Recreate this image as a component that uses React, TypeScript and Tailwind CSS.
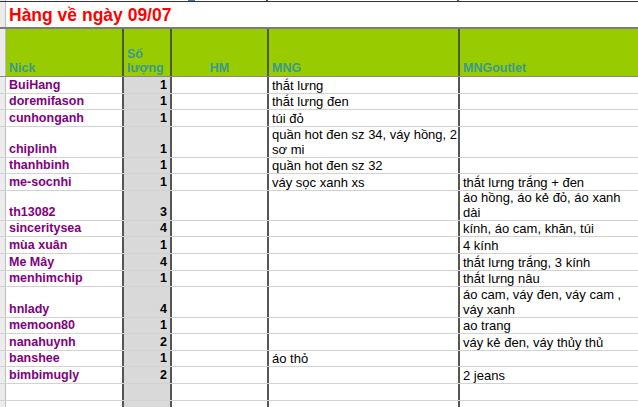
import React from "react";

type Row = {
  nick?: string;
  qty?: string;
  mng?: string[];
  out?: string[];
  h: number;
};

const rows: Row[] = [
  { nick: "BuiHang", qty: "1", mng: ["thắt lưng"], h: 17 },
  { nick: "doremifason", qty: "1", mng: ["thắt lưng đen"], h: 16 },
  { nick: "cunhonganh", qty: "1", mng: ["túi đỏ"], h: 17 },
  { nick: "chiplinh", qty: "1", mng: ["quần hot đen sz 34, váy hồng, 2", "sơ mi"], h: 31 },
  { nick: "thanhbinh", qty: "1", mng: ["quần hot đen sz 32"], h: 16 },
  { nick: "me-socnhi", qty: "1", mng: ["váy sọc xanh xs"], out: ["thắt lưng trắng + đen"], h: 17 },
  { nick: "th13082", qty: "3", out: ["áo hồng, áo kẻ đỏ, áo xanh", "dài"], h: 30 },
  { nick: "sinceritysea", qty: "4", out: ["kính, áo cam, khăn, túi"], h: 16 },
  { nick: "mùa xuân", qty: "1", out: ["4 kính"], h: 17 },
  { nick: "Me Mây", qty: "4", out: ["thắt lưng trắng, 3 kính"], h: 17 },
  { nick: "menhimchip", qty: "1", out: ["thắt lưng nâu"], h: 16 },
  { nick: "hnlady", qty: "4", out: ["áo cam, váy đen, váy cam ,", "váy xanh"], h: 31 },
  { nick: "memoon80", qty: "1", out: ["ao trang"], h: 16 },
  { nick: "nanahuynh", qty: "2", out: ["váy kẻ đen, váy thủy thủ"], h: 17 },
  { nick: "banshee", qty: "1", mng: ["áo thỏ"], h: 16 },
  { nick: "bimbimugly", qty: "2", out: ["2 jeans"], h: 17 },
  { h: 17 },
  { h: 17 },
];

function Lines({ lines }: { lines?: string[] }) {
  if (!lines) return null;
  return (
    <div className="whitespace-nowrap">
      {lines.map((l, i) => (
        <div key={i}>{l}</div>
      ))}
    </div>
  );
}

export default function App() {
  return (
    <div
      className="w-[638px] h-[407px] overflow-hidden bg-white text-black"
      style={{ fontFamily: '"Liberation Sans", Arial, sans-serif' }}
    >
      {/* top partial row */}
      <div className="flex h-[2px] border-b border-[#333]">
        <div className="w-[6px] shrink-0 bg-[#ececec] border-r border-[#bdbdbd]" />
        <div className="w-[182px] shrink-0" />
        <div className="w-[7px] shrink-0 bg-[#3a6fe0]" />
        <div className="w-[73px] shrink-0 border-r-2 border-[#555]" />
        <div className="w-[191px] shrink-0 border-r-2 border-[#555]" />
        <div className="flex-1" />
      </div>
      {/* title row */}
      <div className="flex h-[25px]">
        <div className="w-[6px] shrink-0 bg-[#ececec] border-r border-[#bdbdbd]" />
        <div className="flex-1 flex items-end pl-[3px] pb-[2px]">
          <span className="text-[17.5px] leading-[20px] font-bold text-[#ff0000] whitespace-nowrap">
            Hàng về ngày 09/07
          </span>
        </div>
      </div>
      {/* header */}
      <div className="flex h-[50px] border-t-2 border-b border-t-[#7c7c7c] border-b-[#8a8a8a] bg-[#99cc00] text-[12.5px] leading-[14px] font-bold text-[#3a9a8e]">
        <div className="w-[6px] shrink-0 bg-[#ececec] border-r border-[#bdbdbd]" />
        <div className="w-[118px] shrink-0 border-r-2 border-[#4b5a2a] flex items-end pl-[3px] pb-[1px]">
          Nick
        </div>
        <div className="w-[48px] shrink-0 border-r-2 border-[#4b5a2a] flex items-end pl-[3px] pb-[1px]">
          <div>
            <div>Số</div>
            <div>lượng</div>
          </div>
        </div>
        <div className="w-[97px] shrink-0 border-r-2 border-[#4b5a2a] flex items-end justify-center pb-[1px]">
          HM
        </div>
        <div className="w-[191px] shrink-0 border-r-2 border-[#4b5a2a] flex items-end pl-[3px] pb-[1px]">
          MNG
        </div>
        <div className="flex-1 flex items-end pl-[3px] pb-[1px]">MNGoutlet</div>
      </div>
      {/* data rows */}
      {rows.map((r, i) => (
        <div
          key={i}
          className="flex border-b border-[#d2d2d2] text-[13px] leading-[15px]"
          style={{ height: r.h }}
        >
          <div className="w-[6px] shrink-0 bg-[#ececec] border-r border-[#bdbdbd]" />
          <div className="w-[118px] shrink-0 border-r-2 border-[#555] flex items-end pl-[3px] font-bold text-[12.5px] text-[#800080] whitespace-nowrap">
            {r.nick}
          </div>
          <div className="w-[48px] shrink-0 bg-[#d9d9d9] border-r-2 border-[#555] flex items-end justify-end pr-[3px] font-bold text-[12.5px]">
            {r.qty}
          </div>
          <div className="w-[97px] shrink-0 border-r-2 border-[#555]" />
          <div className="w-[191px] shrink-0 border-r-2 border-[#555] flex items-end pl-[3px]">
            <Lines lines={r.mng} />
          </div>
          <div className="flex-1 flex items-end pl-[3px]">
            <Lines lines={r.out} />
          </div>
        </div>
      ))}
    </div>
  );
}
